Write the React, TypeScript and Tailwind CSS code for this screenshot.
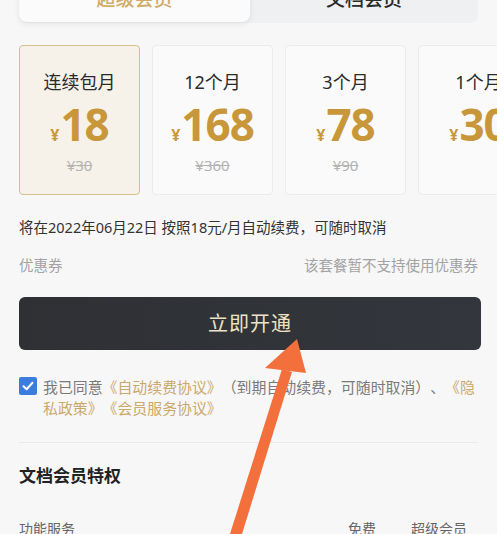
import React from "react"

const plans = [
  { title: "连续包月", price: "18", old: "¥30" },
  { title: "12个月", price: "168", old: "¥360" },
  { title: "3个月", price: "78", old: "¥90" },
  { title: "1个月", price: "30", old: "" },
]

function PlanCard({ plan, active }: { plan: (typeof plans)[number]; active: boolean }) {
  return (
    <div
      className={
        active
          ? "w-[121px] h-[150px] shrink-0 rounded-[4px] border border-[#d6bf8c] bg-[#f6f2e9] flex flex-col items-center"
          : "w-[121px] h-[150px] shrink-0 rounded-[4px] border border-[#ececec] bg-[#fafafa] flex flex-col items-center"
      }
    >
      <div className="mt-[24px] text-[18px] leading-[24px] text-[#2b2b2b]">{plan.title}</div>
      <div className="mt-[6px] flex items-baseline text-[#c8973a]">
        <span className="text-[16px] font-bold mr-[1px]">¥</span>
        <span className="text-[44px] leading-[48px] font-bold tracking-[-1px]">{plan.price}</span>
      </div>
      {plan.old && (
        <div className="mt-[8px] text-[15px] leading-[18px] text-[#b3b3b3] line-through">{plan.old}</div>
      )}
    </div>
  )
}

export default function App() {
  return (
    <div
      className="relative w-[497px] h-[534px] overflow-hidden bg-[#f7f7f7]"
      style={{ fontFamily: '"Noto Sans", "Noto Sans CJK SC", sans-serif' }}
    >
      {/* tabs */}
      <div className="mx-[19px] mt-[-24px] h-[47px] rounded-[8px] bg-[#eef0f2] flex">
        <div className="w-[231px] h-[46px] rounded-[8px] bg-[#fbfbfb] shadow-[0_2px_6px_rgba(0,0,0,0.08)] flex items-center justify-center text-[19px] font-medium text-[#d2ad6a]">
          超级会员
        </div>
        <div className="flex-1 flex items-center justify-center text-[19px] font-medium text-[#2b2b2b]">
          文档会员
        </div>
      </div>

      {/* plans */}
      <div className="mt-[22px] pl-[19px] flex gap-[12px]">
        {plans.map((p, i) => (
          <PlanCard key={p.title} plan={p} active={i === 0} />
        ))}
      </div>

      <div className="mt-[22px] px-[19px] text-[14.5px] leading-[20px] text-[#333]">
        将在2022年06月22日 按照18元/月自动续费，可随时取消
      </div>

      <div className="mt-[18px] px-[19px] flex justify-between text-[14.5px] leading-[20px] text-[#a3a3a3]">
        <span>优惠券</span>
        <span>该套餐暂不支持使用优惠券</span>
      </div>

      <button className="mt-[22px] mx-[19px] w-[462px] h-[53px] rounded-[6px] bg-gradient-to-r from-[#2e3034] to-[#33363c] text-[20px] text-[#efe2c2] flex items-center justify-center tracking-[1px]">
        立即开通
      </button>

      <div className="mt-[26px] px-[19px] flex gap-[6px]">
        <div className="mt-[1px] w-[18px] h-[18px] shrink-0 rounded-[2px] bg-[#3b7ddc] flex items-center justify-center">
          <svg width="14" height="14" viewBox="0 0 14 14" fill="none">
            <path d="M2.5 7.2 L5.6 10.2 L11.5 3.8" stroke="white" strokeWidth="2" strokeLinecap="round" strokeLinejoin="round" />
          </svg>
        </div>
        <p
          className="text-[14.9px] leading-[21px] text-[#7a7a7a] [line-break:anywhere] [text-spacing-trim:space-all]"
          style={{ fontFamily: '"Noto Sans CJK SC", sans-serif' }}
        >
          我已同意<span className="text-[#cba96a]">《自动续费协议》</span>（到期自动续费，可随时取消）、<span className="text-[#cba96a]">《隐私政策》《会员服务协议》</span>
        </p>
      </div>

      <div className="mt-[24px] mx-[19px] h-px bg-[#eaeaea]" />

      <div className="mt-[22px] px-[19px] text-[17px] leading-[22px] font-bold text-[#222]">文档会员特权</div>

      <div className="mt-[32px] px-[19px] flex text-[14px] leading-[20px] text-[#666]">
        <span className="flex-1">功能服务</span>
        <span className="w-[63px]">免费</span>
        <span className="w-[67px]">超级会员</span>
      </div>

      {/* annotation arrow */}
      <svg className="absolute left-0 top-0 pointer-events-none" width="497" height="534" viewBox="0 0 497 534">
        <polygon points="230,534 242,534 292,372 282,369" fill="#f36f3c" />
        <polygon points="297,339 265,368 306,373" fill="#f36f3c" />
      </svg>
    </div>
  )
}
